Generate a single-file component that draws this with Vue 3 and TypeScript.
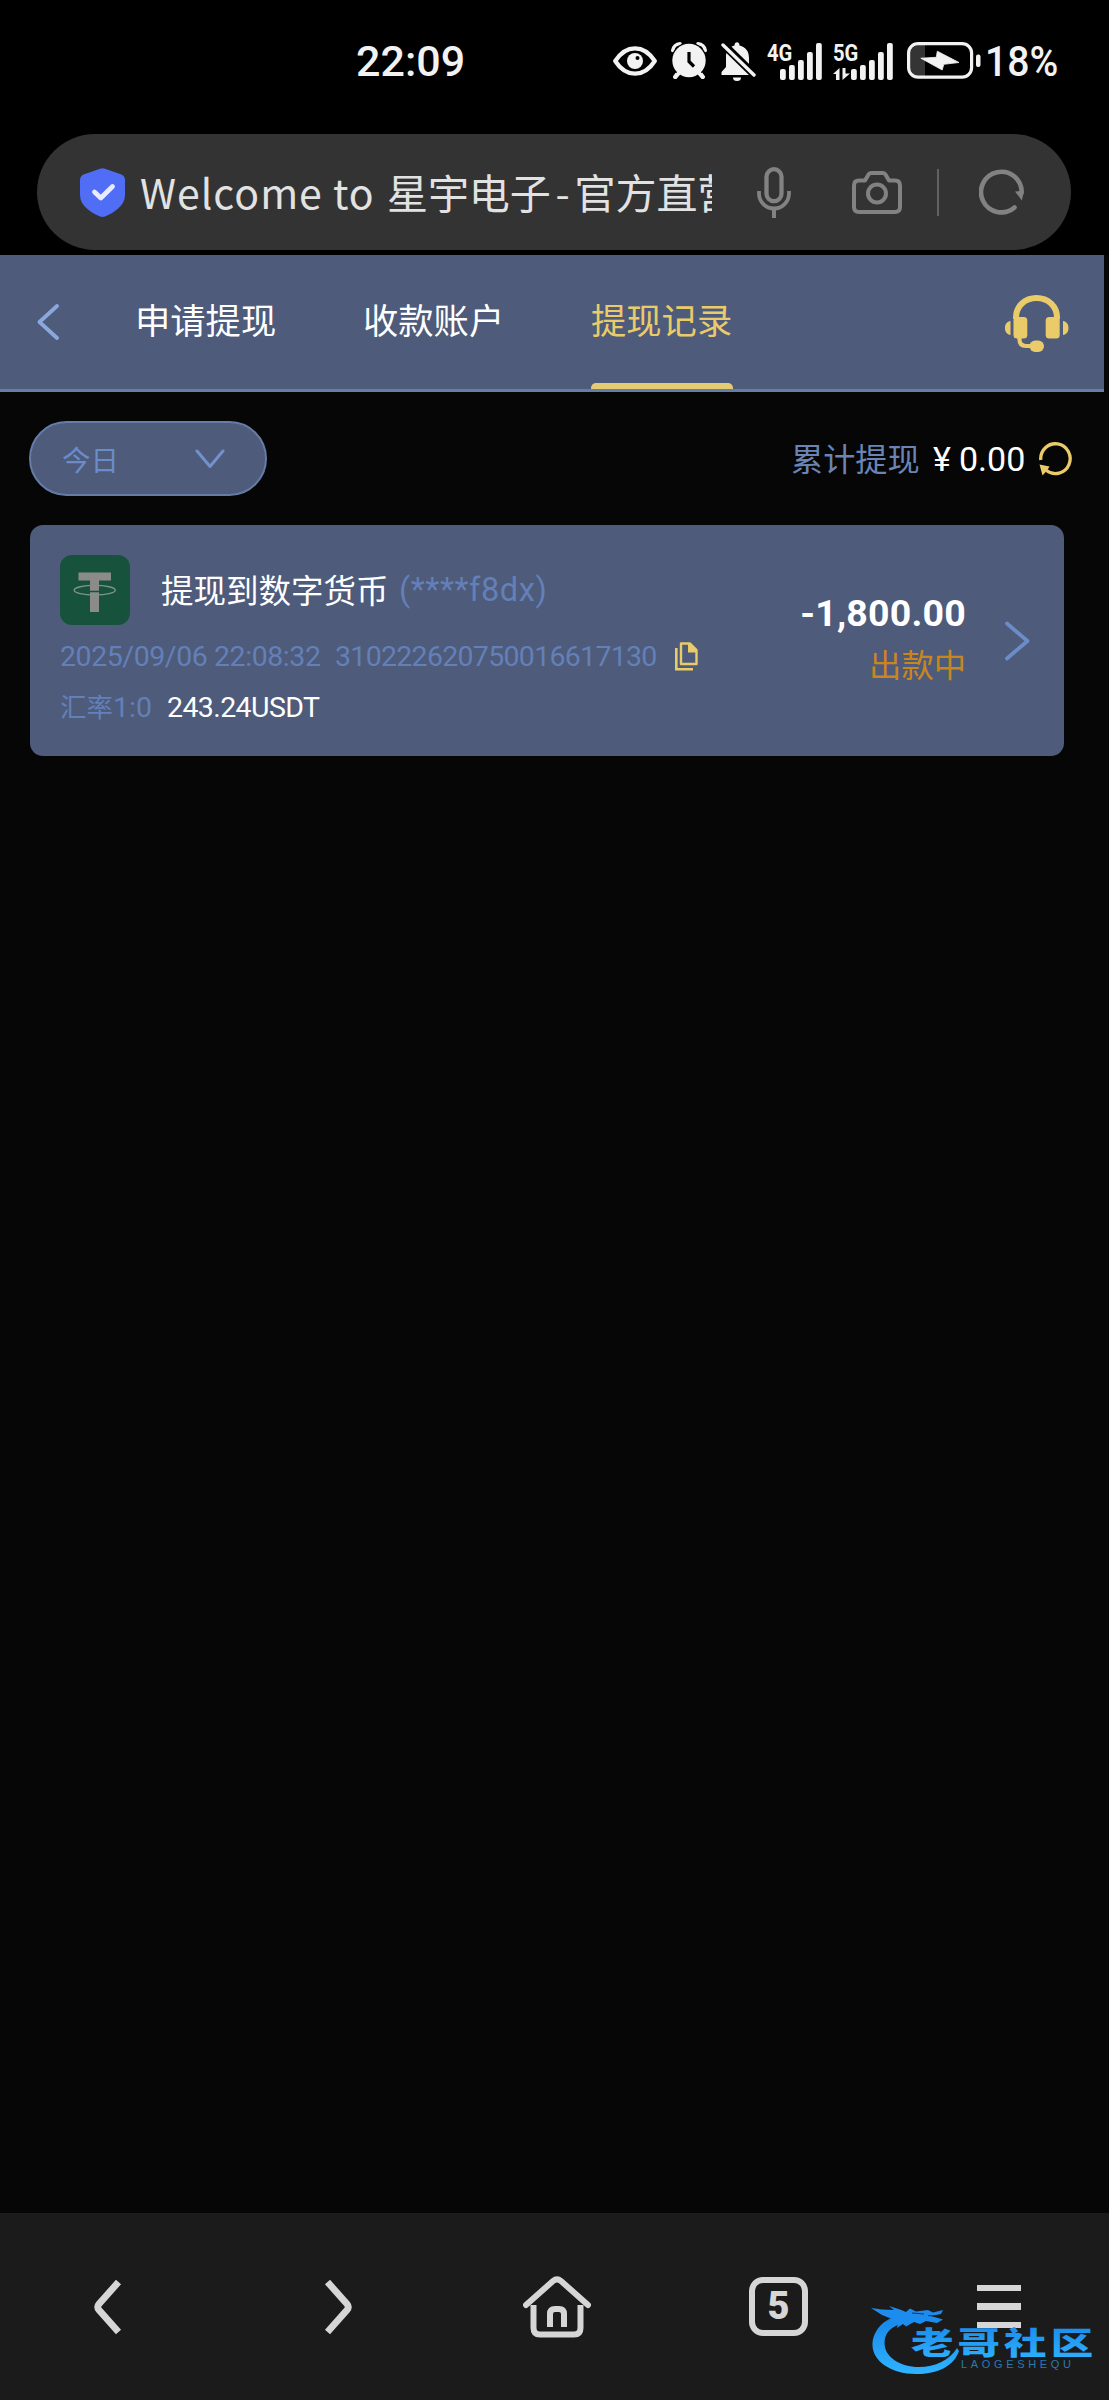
<script setup lang="ts">
interface Tab {
  label: string
  active: boolean
}

const tabs: Tab[] = [
  { label: '申请提现', active: false },
  { label: '收款账户', active: false },
  { label: '提现记录', active: true },
]

const bars = [
  { x: 0, y: 26 },
  { x: 9, y: 22 },
  { x: 18, y: 17 },
  { x: 27, y: 9 },
  { x: 36, y: 0 },
]
</script>

<template>
  <div class="phone">
    <div class="chrome">
      <header class="status">
        <span class="clock">22:09</span>
        <svg class="eye" width="44" height="30" viewBox="0 0 44 30">
          <path d="M2.2 15C8 6 14 2.3 22 2.3S36 6 41.800 15C36 24 30 27.700 22 27.700S8 24 2.200 15Z" fill="none" stroke="#f2f2f2" stroke-width="4.200" stroke-linejoin="round" />
          <circle cx="22" cy="15" r="8" fill="#f2f2f2" />
          <circle cx="24.500" cy="12" r="2" fill="#000" />
        </svg>
        <svg class="alarm" width="36" height="37" viewBox="0 0 36 37">
          <g stroke="#f2f2f2" stroke-linecap="round" fill="none">
            <path d="M7 31l-3 4M29 31l3 4" stroke-width="4" />
            <path d="M1.800 8.500A7.500 7.500 0 0 1 9 1.800M27 1.800A7.500 7.500 0 0 1 34.200 8.500" stroke-width="3.600" />
          </g>
          <circle cx="18" cy="18.500" r="18" fill="#000" />
          <circle cx="18" cy="18.500" r="16.700" fill="#f2f2f2" />
          <path d="M7.500 31.500l-3 3.500M28.500 31.500l3 3.500" stroke="#f2f2f2" stroke-width="4" stroke-linecap="round" />
          <path d="M18 10v9.500l5 5" stroke="#000" stroke-width="3.200" fill="none" />
        </svg>
        <svg class="bell" width="35" height="40" viewBox="0 0 35 40">
          <path d="M13.500 3.500C13.500 1.500 14.600 .3 16 .3s2.500 1.200 2.500 3.200C25 5 28 9.500 28 16v8l5 6v3H.5v-3L5 25V13C6 8 9 4.500 13.500 3.500Z" fill="#f2f2f2" />
          <path d="M12 35.500h8a4 3.500 0 0 1-8 0Z" fill="#f2f2f2" />
          <path d="M1 1L34 33.500" stroke="#000" stroke-width="8" />
          <path d="M2 3L33 33" stroke="#f2f2f2" stroke-width="3.400" stroke-linecap="round" />
        </svg>
        <div class="signal">
          <span class="net">4G</span>
          <svg class="bars" width="42" height="37" viewBox="0 0 42 37">
            <rect v-for="b in bars" :key="b.x" :x="b.x" :y="b.y" width="5.800" :height="37 - b.y" rx="2" fill="#f2f2f2" />
          </svg>
        </div>
        <div class="signal second">
          <span class="net">5G</span>
          <svg class="arrows" width="18" height="12" viewBox="0 0 18 12">
            <path d="M0 6L6.500 0v12H3V6ZM9.500 0h3v5.500h4.500L9.500 12Z" fill="#f2f2f2" />
          </svg>
          <svg class="bars" width="42" height="37" viewBox="0 0 42 37">
            <rect v-for="b in bars" :key="b.x" :x="b.x" :y="b.y" width="5.800" :height="37 - b.y" rx="2" fill="#f2f2f2" />
          </svg>
        </div>
        <svg class="battery" width="74" height="37" viewBox="0 0 74 37">
          <path d="M18 3H12a9 9 0 0 0-9 9v13a9 9 0 0 0 9 9h6Z" fill="#343434" />
          <rect x="1.600" y="1.600" width="63" height="33.500" rx="9.500" fill="none" stroke="#f2f2f2" stroke-width="3.200" />
          <rect x="69" y="12.500" width="4.500" height="12.500" rx="2" fill="#f2f2f2" />
          <path d="M30.300 9.200L52 20.500 36.800 22.300 35.200 28 13.800 16.200 29.300 15.300Z" fill="#f2f2f2" stroke="#f2f2f2" stroke-width=".8" stroke-linejoin="round" />
        </svg>
        <span class="percent">18%</span>
      </header>

      <div class="address">
        <svg class="shield" width="45" height="49" viewBox="0 0 45 49">
          <path d="M20 .7Q22.500-.3 25 .7L41.500 6.500Q45 8 45 12V27C45 38 34 44.500 25.500 48.300Q22.500 49.500 19.500 48.300C11 44.500 0 38 0 27V12Q0 8 3.500 6.500Z" fill="#4f6df5" />
          <path d="M14.500 24L20.800 30 32.500 18.500" fill="none" stroke="#e8ebff" stroke-width="4.800" stroke-linecap="round" stroke-linejoin="round" />
        </svg>
        <div class="page-title"><span class="latin">Welcome to</span><span class="han">星宇电子</span><span class="dash">-</span><span class="han">官方直营</span></div>
        <svg class="mic" width="34" height="51" viewBox="0 0 34 51">
          <rect x="9.500" y="2.200" width="15" height="32" rx="7.500" fill="none" stroke="#828282" stroke-width="4.300" />
          <path d="M2 24v2.500A15 15 0 0 0 32 26.500V24" fill="none" stroke="#828282" stroke-width="3.800" />
          <path d="M17 42v9" stroke="#828282" stroke-width="4" />
        </svg>
        <svg class="camera" width="50" height="43" viewBox="0 0 50 43">
          <path d="M7 9.500h6l3.500-6Q17.300 2 19 2h12q1.700 0 2.500 1.500l3.500 6h6q5 0 5 5V36q0 5-5 5H7q-5 0-5-5V14.500q0-5 5-5Z" fill="none" stroke="#828282" stroke-width="4" stroke-linejoin="round" />
          <circle cx="25" cy="22.500" r="9" fill="none" stroke="#828282" stroke-width="4" />
        </svg>
        <i class="divider" />
        <svg class="reload" width="46" height="46" viewBox="0 0 46 46">
          <path d="M35.500 38.500A20.300 20.300 0 1 1 42.600 24" fill="none" stroke="#828282" stroke-width="4.600" stroke-linecap="round" />
          <path d="M36 22.500l8.900-1-2 10Z" fill="#828282" />
        </svg>
      </div>
    </div>

    <main class="page">
      <nav class="tabs">
        <svg class="back" width="22" height="36" viewBox="0 0 22 36">
          <path d="M20 2L2.500 18 20 34" fill="none" stroke="#8aa8dc" stroke-width="3.800" stroke-linecap="round" stroke-linejoin="round" />
        </svg>
        <span v-for="t in tabs" :key="t.label" class="tab" :class="{ active: t.active }">{{ t.label }}</span>
        <svg class="headset" width="64" height="57" viewBox="0 0 64 57">
          <path d="M11 24V22.500C11 11 20 3 31.500 3S52 11 52 22.500V24" fill="none" stroke="#eacb6a" stroke-width="6" />
          <rect x="8.500" y="22" width="13.800" height="21.500" rx="3.500" fill="#eacb6a" />
          <rect x="40.700" y="22" width="14" height="21.500" rx="3.500" fill="#eacb6a" />
          <path d="M5.500 26v14C2 39.500 0 37 0 33s2-6.500 5.500-7ZM58 26v14c3.500-.5 5.500-3 5.500-7s-2-6.500-5.500-7Z" fill="#eacb6a" />
          <path d="M14.500 43v1.500c0 4.500 2.500 6.500 6.500 6.500h8" fill="none" stroke="#eacb6a" stroke-width="4.200" />
          <rect x="24.500" y="45.500" width="14.500" height="11.500" rx="5.700" fill="#eacb6a" />
        </svg>
      </nav>

      <section class="filter">
        <button class="select">
          <span>今日</span>
          <svg width="30" height="20" viewBox="0 0 30 20">
            <path d="M2 2L15 17.500 28 2" fill="none" stroke="#7391cc" stroke-width="3" stroke-linecap="round" stroke-linejoin="round" />
          </svg>
        </button>
        <div class="total">
          <span class="total-label">累计提现</span>
          <span class="yen">¥</span>
          <span class="total-value">0.00</span>
          <svg width="33" height="34" viewBox="0 0 33 34">
            <path d="M1.800 18A14.700 14.900 0 1 1 7.500 28.500" fill="none" stroke="#eacb6a" stroke-width="3.300" />
            <path d="M.5 22.500L10.500 24.500 8.500 28 3.500 33.500Z" fill="#eacb6a" />
          </svg>
        </div>
      </section>

      <article class="card">
        <div class="info">
          <div class="row-title">
            <svg width="70" height="70" viewBox="0 0 70 70">
              <rect width="70" height="70" rx="12" fill="#17523d" />
              <path d="M18.500 17.500h32.500v8H39V57H30V25.500H18.500Z" fill="#8b8b8b" />
              <ellipse cx="34.700" cy="35.200" rx="20.500" ry="4.800" fill="none" stroke="#7c9389" stroke-width="1.400" />
              <path d="M29.500 36.500h10" stroke="#17523d" stroke-width="1.500" />
            </svg>
            <span class="name">提现到数字货币</span>
            <span class="tail">(****f8dx)</span>
          </div>
          <div class="row-meta">
            <span class="date">2025/09/06 22:08:32</span>
            <span class="order">310222620750016617130</span>
            <svg width="23" height="29" viewBox="0 0 23 29">
              <path d="M6 1.500H15L21.500 8V22H6Z" fill="none" stroke="#eacb6a" stroke-width="2.400" stroke-linejoin="round" />
              <path d="M13 1.500H15.500L21.500 8V10.500H13Z" fill="#eacb6a" />
              <path d="M1.300 6V27.300H18" fill="none" stroke="#eacb6a" stroke-width="2.600" />
            </svg>
          </div>
          <div class="row-rate">
            <span class="rate">汇率<b>1:0</b></span>
            <span class="usdt">243.24USDT</span>
          </div>
        </div>
        <div class="amount">
          <strong>-1,800.00</strong>
          <span>出款中</span>
        </div>
        <svg class="more" width="25" height="40" viewBox="0 0 25 40">
          <path d="M2 2.500L22.500 20 2 37.500" fill="none" stroke="#6a8dca" stroke-width="3.800" stroke-linecap="round" stroke-linejoin="round" />
        </svg>
      </article>
    </main>

    <footer class="toolbar">
      <svg width="28" height="60" viewBox="0 0 28 60">
        <path d="M24.500 5L5 27Q2.500 30 5 33L24.500 55" fill="none" stroke="#d6d6d6" stroke-width="6.800" />
      </svg>
      <svg class="forward" width="28" height="60" viewBox="0 0 28 60">
        <path d="M3.500 5L23 27Q25.500 30 23 33L3.500 55" fill="none" stroke="#d6d6d6" stroke-width="6.800" />
      </svg>
      <svg class="home" width="68" height="62" viewBox="0 0 68 62">
        <g fill="none" stroke="#d6d6d6" stroke-width="6">
          <path d="M3 29L30 5Q34 1.800 38 5L65 29" stroke-linecap="round" />
          <path d="M10.500 29V52Q10.500 58.500 17 58.500H51Q57.500 58.500 57.500 52V29" />
          <path d="M27 51V38Q27 33 32 33H36Q41 33 41 38V51" />
        </g>
      </svg>
      <span class="count">5</span>
      <span class="menu"><i /><i /><i /></span>
    </footer>

    <div class="watermark">
      <svg width="230" height="80" viewBox="0 0 230 80">
        <defs>
          <linearGradient id="blue" x1="0" y1="0" x2="0" y2="1">
            <stop offset="0" stop-color="#1683e8" />
            <stop offset="1" stop-color="#2fb4ff" />
          </linearGradient>
        </defs>
        <path d="M30 16C13 20 2.500 32 2.500 46 2.500 62 21 75 46 75 68 75 84 67 89 52L87 49C80 61 65 68 49 68 30 68 14.500 58 14.500 44 14.500 35 20 28 31 25Z" fill="url(#blue)" />
        <path d="M1 9L12 10.500 24 11 19 7 30 10.500 36 13 40 9.500 46 12.500 58 11 63 13.500 73 11 71 15 61 17 73 20.500 67 24 56 22 50 25 44 23 36 27.500 33 25 27 29 28 24 17 25 22 20 12 16Z" fill="#1c8cee" />
        <path d="M58 16.500L72 17.500M42 14L54 15" stroke="#1b1b1b" stroke-width=".8" />
        <text transform="translate(41 54.500) scale(1.370 1)" class="brand" fill="url(#blue)">老哥社区</text>
        <text x="91" y="68.500" textLength="110" class="brand-sub">LAOGESHEQU</text>
      </svg>
    </div>
  </div>
</template>

<style>
body {
  margin: 0;
  background: #060606;
}
</style>

<style scoped>
.phone {
  position: relative;
  width: 1109px;
  height: 2400px;
  overflow: hidden;
  display: flex;
  flex-direction: column;
  background: #060606;
  font-family: Roboto, "Noto Sans CJK SC", sans-serif;
}
.phone svg {
  display: block;
  flex: none;
}
.phone span {
  white-space: nowrap;
  flex: none;
}
.chrome {
  flex: none;
  height: 255px;
  background: #000;
}
.status {
  height: 134px;
  display: flex;
  align-items: flex-start;
  color: #f2f2f2;
}
.clock {
  margin: 36px 0 0 356px;
  width: 257px;
  font-size: 43px;
  line-height: 50px;
  font-weight: 500;
}
.eye { margin-top: 46px; }
.alarm { margin: 42px 0 0 14px; }
.bell { margin: 42px 0 0 14px; }
.signal {
  position: relative;
  width: 54px;
  height: 37px;
  margin: 43px 0 0 11px;
}
.signal.second { margin-left: 12px; width: 60px; }
.net {
  position: absolute;
  left: 0;
  top: -2px;
  font-size: 24px;
  line-height: 24px;
  font-weight: 700;
  transform: scaleX(.84);
  transform-origin: left;
}
.bars {
  position: absolute;
  left: 13px;
  top: 0;
}
.second .bars { left: 18px; }
.arrows {
  position: absolute;
  left: 0;
  top: 25px;
}
.battery { margin: 42px 0 0 14px; }
.percent {
  margin: 36px 0 0 4px;
  font-size: 43px;
  line-height: 50px;
  font-weight: 500;
  transform: scaleX(.91);
  transform-origin: left;
}
.address {
  width: 991px;
  height: 116px;
  margin-left: 37px;
  padding-left: 43px;
  display: flex;
  align-items: center;
  background: #333;
  border-radius: 58px;
}
.page-title {
  width: 572px;
  height: 60px;
  margin: 0 0 2px 15px;
  overflow: hidden;
  display: flex;
  font-family: "Noto Sans CJK SC", sans-serif;
  font-size: 41px;
  line-height: 60px;
  color: #e2e2e2;
}
.latin { width: 247px; letter-spacing: 1px; }
.han { letter-spacing: -.1px; }
.dash { width: 24px; text-align: center; }
.mic { margin-left: 45px; }
.camera { margin-left: 61px; }
.divider {
  width: 2px;
  height: 47px;
  margin-left: 35px;
  background: #626262;
}
.reload { margin-left: 40px; }
.page {
  flex: 1;
}
.tabs {
  width: 1104px;
  height: 137px;
  box-sizing: border-box;
  border-bottom: 3px solid #647ea8;
  background: #4e5b7a;
  display: flex;
  align-items: center;
}
.back { margin-left: 37px; }
.tab {
  position: relative;
  width: 142px;
  height: 134px;
  line-height: 135px;
  margin-left: 76px;
  font-size: 35.300px;
  color: #fff;
}
.tab + .tab { margin-left: 86px; }
.tab.active { color: #eacb6a; }
.tab.active::after {
  content: '';
  position: absolute;
  left: 0;
  bottom: 0;
  width: 142px;
  height: 6px;
  border-radius: 5px 5px 0 0;
  background: #e5cb72;
}
.headset { margin: 2px 0 0 272px; }
.filter {
  display: flex;
  justify-content: space-between;
  align-items: center;
  height: 75px;
  padding: 29px 37px 29px 29px;
}
.select {
  display: flex;
  align-items: center;
  width: 238px;
  height: 75px;
  box-sizing: border-box;
  padding: 0 40px 0 31px;
  justify-content: space-between;
  border: 2.500px solid #657ca7;
  border-radius: 38px;
  background: #4e5b7a;
  color: #6a8dca;
  font: 28.500px Roboto, "Noto Sans CJK SC", sans-serif;
}
.total {
  display: flex;
  align-items: center;
}
.total-label {
  width: 142px;
  margin-bottom: 3px;
  font-size: 32.200px;
  color: #6984b5;
}
.yen, .total-value {
  color: #fff;
  font-size: 34px;
}
.yen { width: 26px; }
.total-value { width: 80px; }
.card {
  display: flex;
  align-items: center;
  box-sizing: border-box;
  width: 1034px;
  height: 231px;
  margin-left: 30px;
  padding-left: 30px;
  border-radius: 13px;
  background: #4e5b7a;
}
.info {
  width: 700px;
  height: 171px;
  display: flex;
  flex-direction: column;
}
.row-title {
  height: 70px;
  display: flex;
  align-items: center;
}
.name {
  width: 238px;
  margin: 0 0 4px 31px;
  font-size: 32.500px;
  color: #fff;
}
.tail {
  font-size: 32.500px;
  letter-spacing: .600px;
  color: #6380b8;
}
.row-meta {
  display: flex;
  align-items: center;
  height: 34px;
  margin-top: 14px;
  font-size: 28.500px;
  color: #6380b8;
}
.date { width: 275px; letter-spacing: -.430px; }
.order { width: 340px; letter-spacing: -.700px; }
.row-rate {
  display: flex;
  align-items: center;
  height: 34px;
  margin-top: 17px;
  font-size: 28.500px;
}
.rate { width: 107px; margin-bottom: 3px; color: #6380b8; font-size: 26.500px; }
.rate b { font-weight: 400; font-size: 28.500px; }
.usdt { color: #fff; letter-spacing: -.600px; }
.amount {
  width: 206px;
  display: flex;
  flex-direction: column;
  align-items: flex-end;
  margin-top: -1px;
}
.amount strong {
  color: #fff;
  font-size: 37.500px;
  line-height: 44px;
  letter-spacing: .200px;
}
.amount span {
  margin-top: 8px;
  color: #c9861f;
  font-size: 32.300px;
  line-height: 46px;
}
.more { margin-left: 39px; }
.toolbar {
  flex: none;
  height: 187px;
  box-sizing: border-box;
  padding-left: 94px;
  display: flex;
  align-items: center;
  background: #1b1b1b;
}
.forward { margin-left: 202px; }
.home { margin-left: 171px; }
.count {
  box-sizing: border-box;
  width: 59px;
  height: 59px;
  margin-left: 158px;
  border: 6px solid #d6d6d6;
  border-radius: 14px;
  color: #d6d6d6;
  font: 900 38px/47px Roboto, sans-serif;
  text-align: center;
}
.menu {
  display: flex;
  flex-direction: column;
  gap: 12px;
  margin-left: 169px;
}
.menu i {
  width: 44px;
  height: 6.500px;
  background: #d6d6d6;
}
.watermark {
  position: absolute;
  left: 870px;
  top: 2299px;
}
.brand {
  font: 900 31px "Noto Sans CJK SC", sans-serif;
  letter-spacing: 3px;
}
.brand-sub {
  font: 11px "Liberation Sans", sans-serif;
  fill: #2a7ab4;
}
</style>
